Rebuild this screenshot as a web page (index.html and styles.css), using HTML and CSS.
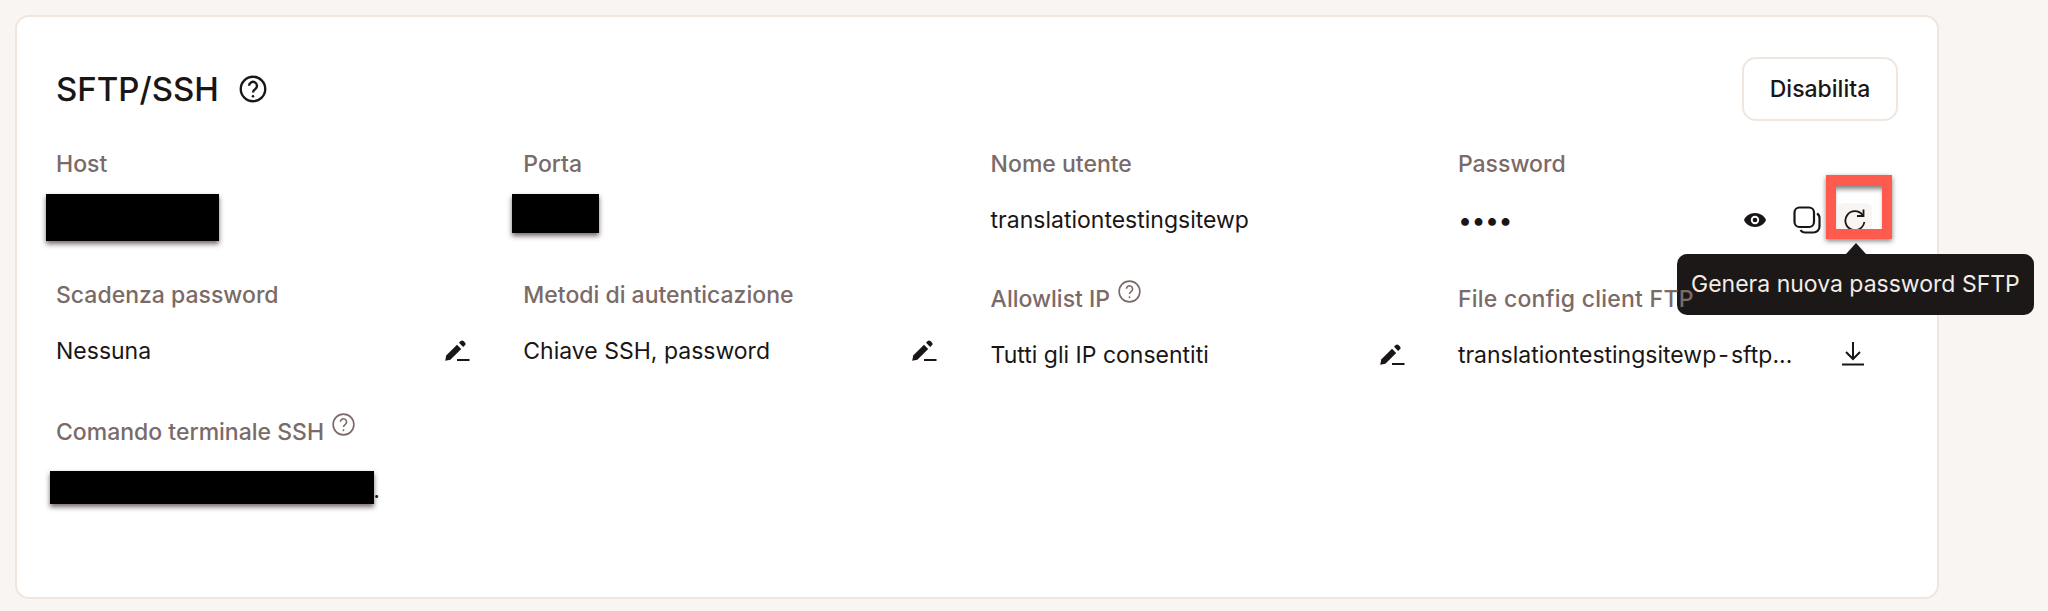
FILE: index.html
```html
<!DOCTYPE html>
<html>
<head lang="it">
    <meta charset="UTF-8">
    <title>SFTP/SSH</title>
    <link rel="stylesheet" href="styles.css">
</head>
<body>
<div class="card">
    <div class="card-head">
        <h2 class="card-title">SFTP/SSH
            <svg class="title-help" viewBox="0 0 24 24"><circle cx="12" cy="12" r="10.5"/><path d="M8.6 9.2a3.4 3.4 0 1 1 5.4 2.8c-1.3.9-2 1.5-2 3"/><circle class="dot" cx="12" cy="18.2" r="1.1"/></svg>
        </h2>
        <button class="btn">Disabilita</button>
    </div>
    <div class="info-grid">
        <div class="cell">
            <div class="label"><span>Host</span></div>
            <div class="value"><span>sftp.example</span></div>
            <div class="redact redact-host"></div>
        </div>
        <div class="cell">
            <div class="label"><span>Porta</span></div>
            <div class="value"><span>12345</span></div>
            <div class="redact redact-port"></div>
        </div>
        <div class="cell">
            <div class="label"><span>Nome utente</span></div>
            <div class="value"><span>translationtestingsitewp</span></div>
        </div>
        <div class="cell">
            <div class="label"><span>Password</span></div>
            <div class="value">
                <span class="dots">••••</span>
                <div class="actions">
                    <span class="icon-btn">
                        <svg class="eye" viewBox="0 0 24 16"><path d="M12 1C6.8 1 2.6 4 1 8c1.6 4 5.8 7 11 7s9.4-3 11-7c-1.600-4-5.800-7-11-7z"/><circle cx="12" cy="8" r="4.200" fill="#fff"/><circle cx="12" cy="8" r="2.300"/></svg>
                    </span>
                    <span class="icon-btn">
                        <svg class="copy" viewBox="0 0 28 28"><rect x="1.500" y="1.500" width="19.500" height="19.500" rx="5"/><path d="M24 7.500c1.600 1 2.500 2.600 2.500 4.500v8.500a6 6 0 0 1-6 6H12c-1.900 0-3.500-.9-4.500-2.500"/></svg>
                    </span>
                    <span class="icon-btn icon-btn-hover">
                        <svg class="refresh" viewBox="0 0 24 24"><path d="M19.500 7A9.500 9.500 0 1 0 21.300 14"/><path d="M20.500 1.500V8h-6.500"/></svg>
                        <span class="highlight"></span>
                        <span class="tooltip">Genera nuova password SFTP</span>
                    </span>
                </div>
            </div>
        </div>

        <div class="cell">
            <div class="label"><span>Scadenza password</span></div>
            <div class="value"><span>Nessuna</span>
                <svg class="pencil" viewBox="0 0 26 22"><path d="M1.200 20.800l1-5.200L13 4.800l4.200 4.200L6.400 19.800z"/><path d="M15 2.800l1.700-1.700a2 2 0 0 1 2.800 0l1.400 1.400a2 2 0 0 1 0 2.800L19.200 7z"/><rect x="13" y="19" width="12.500" height="2"/></svg>
            </div>
        </div>
        <div class="cell">
            <div class="label"><span>Metodi di autenticazione</span></div>
            <div class="value"><span>Chiave SSH, password</span>
                <svg class="pencil" viewBox="0 0 26 22"><path d="M1.200 20.800l1-5.200L13 4.800l4.200 4.200L6.400 19.800z"/><path d="M15 2.800l1.700-1.700a2 2 0 0 1 2.800 0l1.400 1.400a2 2 0 0 1 0 2.800L19.200 7z"/><rect x="13" y="19" width="12.500" height="2"/></svg>
            </div>
        </div>
        <div class="cell">
            <div class="label label-help"><span>Allowlist IP</span>
                <svg class="help" viewBox="0 0 24 24"><circle cx="12" cy="12" r="10.800"/><path d="M8.800 9.200a3.200 3.200 0 1 1 5.100 2.600c-1.200.9-1.900 1.500-1.900 2.900"/><circle class="dot" cx="12" cy="18" r="1"/></svg>
            </div>
            <div class="value"><span>Tutti gli IP consentiti</span>
                <svg class="pencil" viewBox="0 0 26 22"><path d="M1.200 20.800l1-5.200L13 4.800l4.200 4.200L6.400 19.800z"/><path d="M15 2.800l1.700-1.700a2 2 0 0 1 2.800 0l1.400 1.400a2 2 0 0 1 0 2.800L19.200 7z"/><rect x="13" y="19" width="12.500" height="2"/></svg>
            </div>
        </div>
        <div class="cell">
            <div class="label label-help label-file"><span>File config client FTP</span></div>
            <div class="value"><span class="file-name">translationtestingsitewp&#8202;-&#8202;sftp...</span>
                <svg class="download" viewBox="0 0 24 24"><path d="M12 0v16"/><path d="M5 10l7 7 7-7"/><path d="M1 22.500h22"/></svg>
            </div>
        </div>

        <div class="cell">
            <div class="label label-help"><span>Comando terminale SSH</span>
                <svg class="help" viewBox="0 0 24 24"><circle cx="12" cy="12" r="10.800"/><path d="M8.800 9.200a3.200 3.200 0 1 1 5.100 2.600c-1.200.9-1.900 1.500-1.900 2.900"/><circle class="dot" cx="12" cy="18" r="1"/></svg>
            </div>
            <div class="value"><span class="cmd-end">.</span></div>
            <div class="redact redact-cmd"></div>
        </div>
    </div>
</div>
</body>
</html>
```

FILE: styles.css
```css
* {
    margin: 0;
    padding: 0;
    box-sizing: border-box;
}
body {
    background: #f8f5f2;
    font-family: Inter, "Noto Sans", sans-serif;
    color: #1a1615;
    padding: 15px 109px 12px 15px;
    overflow: hidden;
}
.card {
    height: 584px;
    background: #fff;
    border: 2px solid #efe6e0;
    border-radius: 14px;
    padding: 40px 39px 0 39px;
}
.card-head {
    display: flex;
    justify-content: space-between;
    align-items: center;
    height: 64px;
}
.card-title {
    display: flex;
    align-items: center;
    gap: 20px;
    font-size: 33px;
    font-weight: 500;
}
.title-help {
    width: 28px;
    height: 28px;
    fill: none;
    stroke: #1a1615;
    stroke-width: 2;
}
.title-help .dot, .help .dot {
    stroke: none;
}
.title-help .dot {
    fill: #1a1615;
}
.btn {
    width: 156px;
    height: 64px;
    background: #fff;
    border: 2px solid #efe6e0;
    border-radius: 14px;
    font: 500 23px Inter, sans-serif;
    color: #1a1615;
}
.info-grid {
    display: grid;
    grid-template-columns: repeat(4, 441px);
    grid-template-rows: 131px 133px auto;
    column-gap: 26.300px;
    margin-top: 29px;
}
.cell {
    position: relative;
}
.label {
    display: flex;
    gap: 8px;
    height: 28px;
    line-height: 28px;
    font-size: 23px;
    font-weight: 500;
    color: #7a6a68;
}
.label-help {
    height: 32px;
    padding-top: 4px;
}
.label-file {
    letter-spacing: 0.250px;
}
.help {
    width: 23px;
    height: 23px;
    margin-top: -5px;
    fill: none;
    stroke: #7a6a68;
    stroke-width: 1.700;
}
.help .dot {
    fill: #7a6a68;
}
.value {
    display: flex;
    align-items: center;
    justify-content: space-between;
    width: 414px;
    height: 40px;
    margin-top: 22px;
    font-size: 23px;
}
.dots {
    font-size: 25px;
    letter-spacing: -0.500px;
}
.actions {
    display: flex;
    align-items: center;
    gap: 16px;
}
.icon-btn {
    position: relative;
    display: flex;
    align-items: center;
    justify-content: center;
    width: 34px;
    height: 34px;
    border-radius: 6px;
}
.icon-btn-hover {
    background: #f8f5f2;
}
.eye {
    width: 24px;
    height: 16px;
    fill: #1a1615;
}
.copy {
    width: 28px;
    height: 28px;
    margin-left: 4px;
    fill: none;
    stroke: #1a1615;
    stroke-width: 2.200;
}
.refresh {
    width: 24px;
    height: 24px;
    fill: none;
    stroke: #1a1615;
    stroke-width: 1.800;
}
.pencil {
    flex: none;
    width: 26px;
    height: 22px;
    fill: #1a1615;
}
.download {
    flex: none;
    width: 24px;
    height: 24px;
    margin-right: 7px;
    margin-top: -3px;
    fill: none;
    stroke: #1a1615;
    stroke-width: 2;
}
.highlight {
    position: absolute;
    left: -12px;
    top: -28px;
    width: 66px;
    height: 64px;
    border: 10px solid #ff5a4e;
    box-shadow: 0 2px 5px rgba(0, 0, 0, 0.5), inset 0 6px 5px -2px rgba(0, 0, 0, 0.5);
}
.tooltip {
    position: absolute;
    left: -161px;
    top: 51px;
    width: 357px;
    height: 61px;
    background: #1c1817;
    border-radius: 10px;
    color: #f2ece8;
    font-size: 23px;
    line-height: 61px;
    text-align: center;
    white-space: nowrap;
}
.tooltip::before {
    content: "";
    position: absolute;
    left: 169px;
    top: -11px;
    border-left: 10px solid transparent;
    border-right: 10px solid transparent;
    border-bottom: 11px solid #1c1817;
}
.redact {
    position: absolute;
    background: #000;
    box-shadow: 0 3px 5px rgba(60, 40, 40, 0.7);
}
.redact-host {
    left: -10px;
    top: 44px;
    width: 173px;
    height: 47px;
}
.redact-port {
    left: -11px;
    top: 44px;
    width: 87px;
    height: 39px;
}
.redact-cmd {
    left: -6px;
    top: 57px;
    width: 324px;
    height: 33px;
}
.cmd-end {
    width: 324px;
    text-align: right;
    padding-top: 4px;
}
```
